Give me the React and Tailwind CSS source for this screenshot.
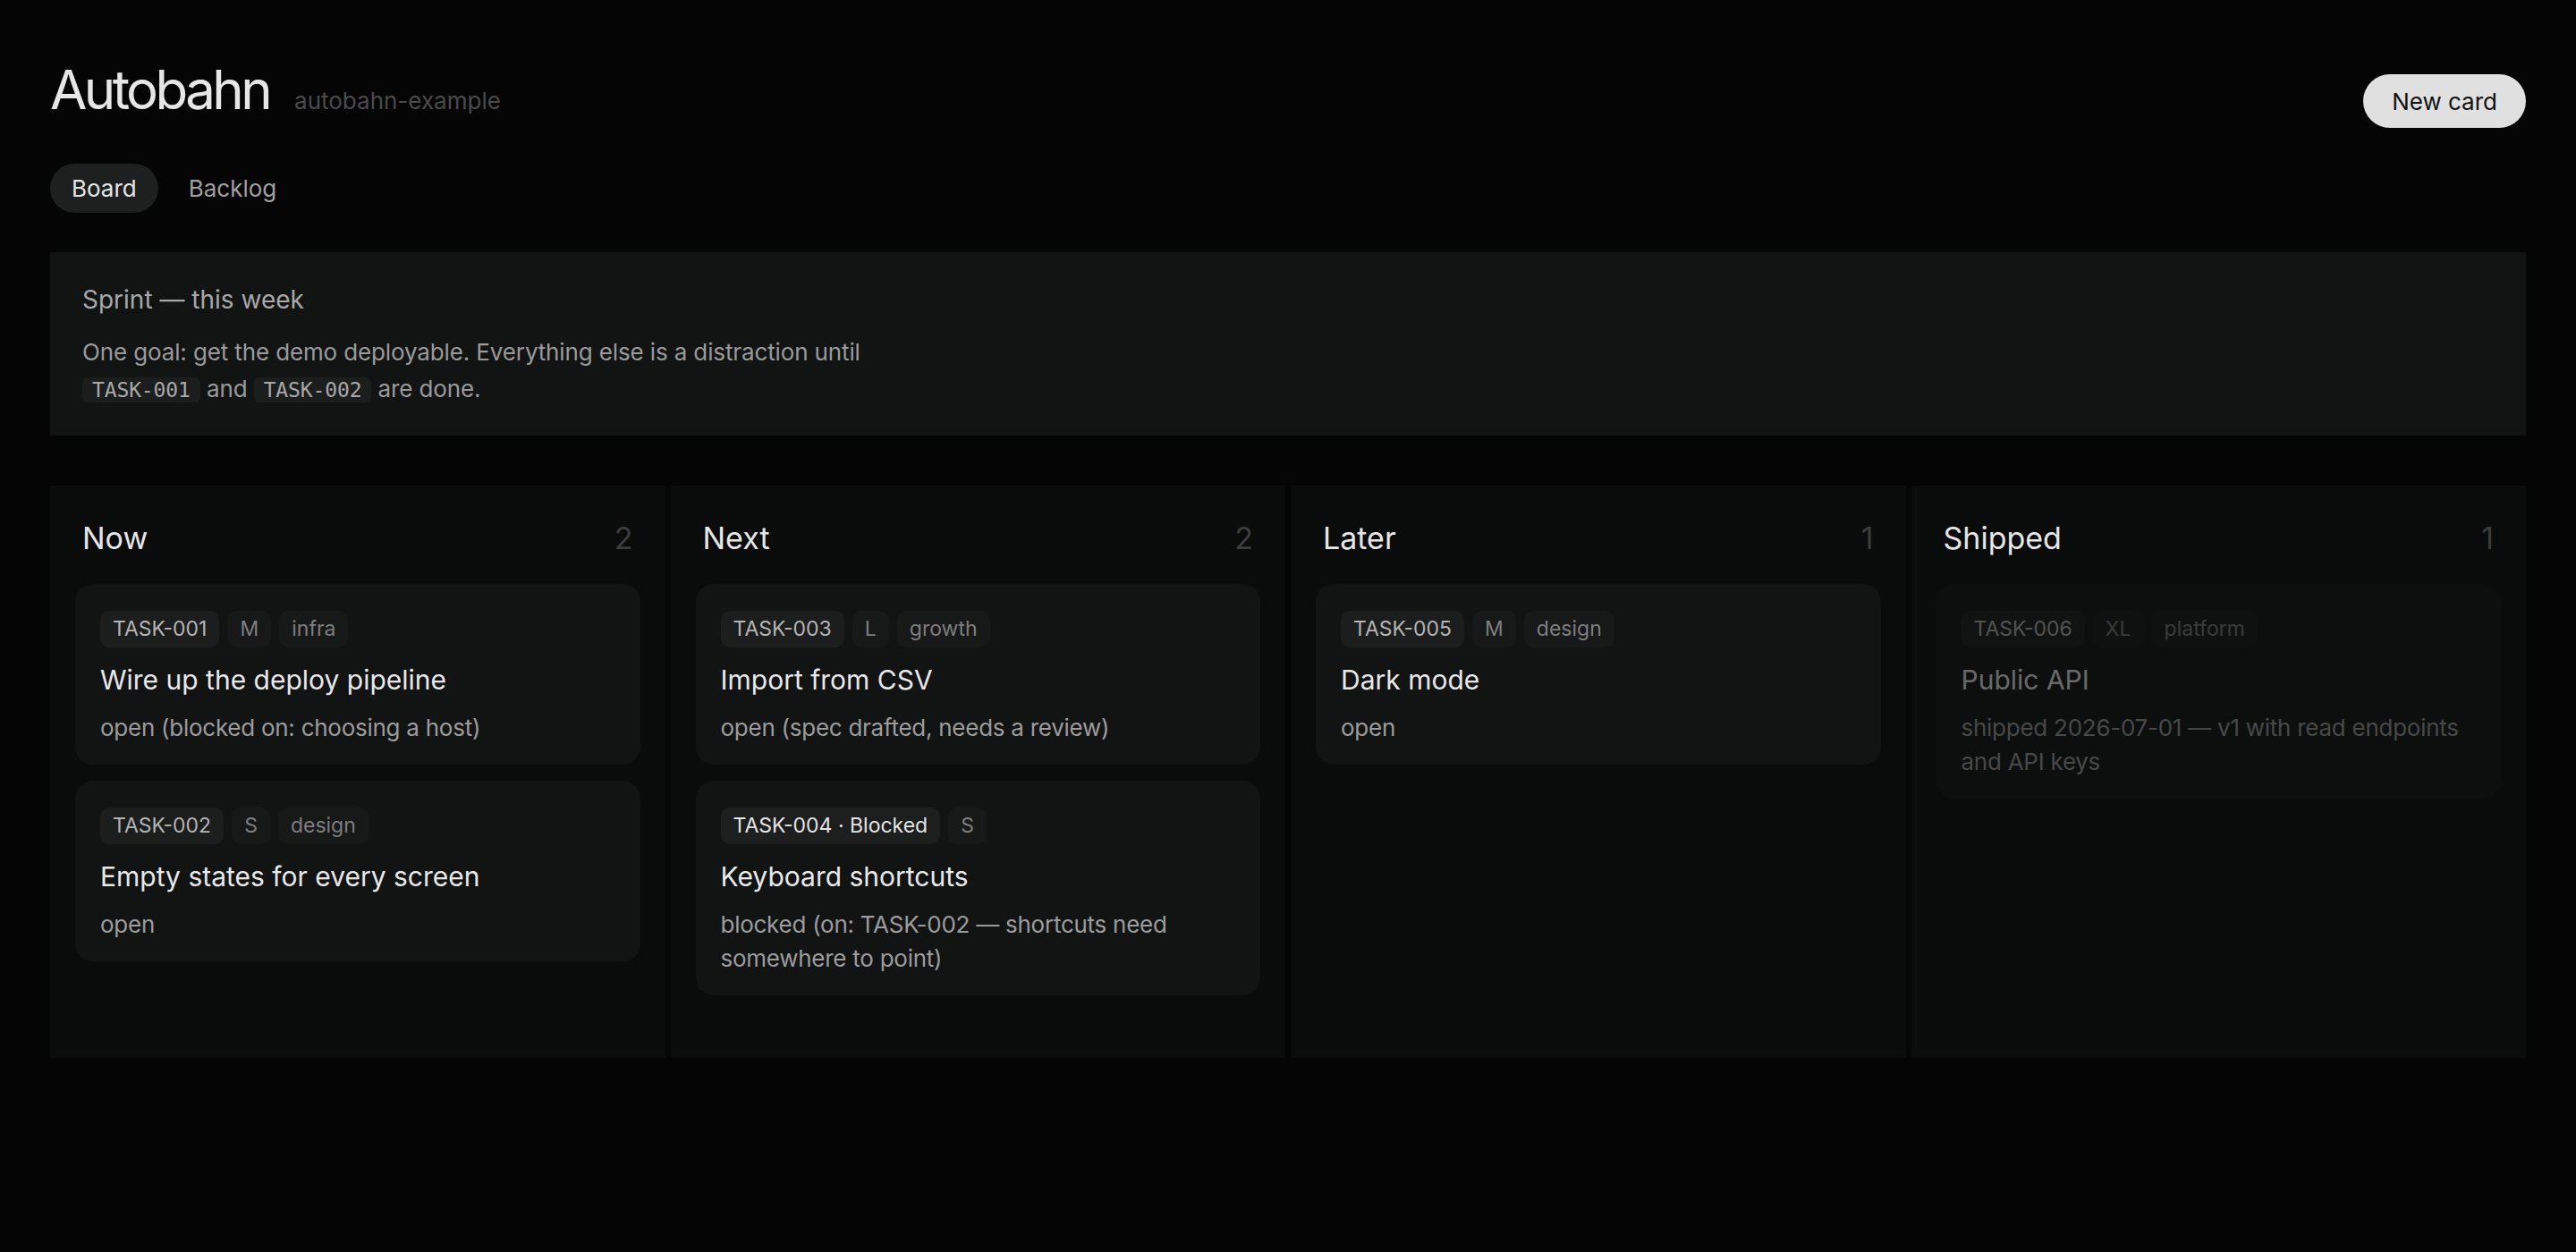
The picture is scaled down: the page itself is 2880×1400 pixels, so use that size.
import React from 'react'

const COLUMNS = [
  {
    name: 'Now',
    cards: [
      { id: 'TASK-001', size: 'M', tag: 'infra', title: 'Wire up the deploy pipeline', status: 'open (blocked on: choosing a host)' },
      { id: 'TASK-002', size: 'S', tag: 'design', title: 'Empty states for every screen', status: 'open' },
    ],
  },
  {
    name: 'Next',
    cards: [
      { id: 'TASK-003', size: 'L', tag: 'growth', title: 'Import from CSV', status: 'open (spec drafted, needs a review)' },
      { id: 'TASK-004 · Blocked', blocked: true, size: 'S', title: 'Keyboard shortcuts', status: 'blocked (on: TASK-002 — shortcuts need somewhere to point)' },
    ],
  },
  {
    name: 'Later',
    cards: [
      { id: 'TASK-005', size: 'M', tag: 'design', title: 'Dark mode', status: 'open' },
    ],
  },
  {
    name: 'Shipped',
    cards: [
      { id: 'TASK-006', size: 'XL', tag: 'platform', title: 'Public API', status: 'shipped 2026-07-01 — v1 with read endpoints and API keys', done: true },
    ],
  },
]

function Chip({ children, strong, bright }) {
  const tone = bright
    ? 'bg-[#1d1e1e] text-[#e4e4e4]'
    : strong
      ? 'bg-[#1c1d1d] text-[#b4b4b4]'
      : 'bg-[#171818] text-[#7e7e7e]'
  return (
    <span className={`h-[41px] flex items-center px-[14px] rounded-[10px] text-[23px] ${tone}`}>
      {children}
    </span>
  )
}

function Card({ card }) {
  return (
    <div className={`bg-[#121313] rounded-[20px] px-7 pt-[30px] pb-[22px] ${card.done ? 'opacity-[0.42]' : ''}`}>
      <div className="flex gap-[9px]">
        <Chip strong bright={card.blocked}>{card.id}</Chip>
        <Chip>{card.size}</Chip>
        {card.tag && <Chip>{card.tag}</Chip>}
      </div>
      <h3 className="mt-[15px] text-[30px] leading-[42px] text-[#e8e8e8]">{card.title}</h3>
      <p className="mt-[14px] text-[26px] leading-[38px] tracking-[-0.01em] text-[#9c9c9c]">{card.status}</p>
    </div>
  )
}

function Column({ col }) {
  return (
    <div className="bg-[#0a0b0b] min-h-[640px] p-7">
      <div className="mt-[10px] mb-[31px] px-2 flex justify-between text-[34px] leading-[41px]">
        <span className="text-[#e6e6e6]">{col.name}</span>
        <span className="text-[#3c3c3c]">{col.cards.length}</span>
      </div>
      <div className="flex flex-col gap-[18px]">
        {col.cards.map(c => <Card key={c.id} card={c} />)}
      </div>
    </div>
  )
}

export default function App() {
  const mono = { fontFamily: '"DejaVu Sans Mono", monospace' }
  return (
    <div className="min-h-screen bg-[#050505] px-14 pt-16 pb-20" style={{ fontFamily: 'Inter, "Noto Sans", sans-serif' }}>
      <header className="flex justify-between items-start">
        <div className="flex items-baseline gap-7">
          <h1 className="text-[60px] leading-[72px] tracking-[-0.06em] text-[#e6e6e6]">Autobahn</h1>
          <span className="text-[26px] text-[#4a4a4a]">autobahn-example</span>
        </div>
        <button className="mt-[19px] h-[60px] px-8 rounded-full bg-[#e0e0e0] text-[#111] text-[26px]">New card</button>
      </header>

      <nav className="mt-[40px] flex items-center gap-[10px] text-[26px]">
        <span className="h-[55px] flex items-center px-6 rounded-full bg-[#1e2020] text-[#e6e6e6]">Board</span>
        <span className="h-[55px] flex items-center px-6 text-[#a0a0a0]">Backlog</span>
      </nav>

      <section className="mt-[44px] bg-[#121414] px-9 pt-[34px] pb-[30px]">
        <h2 className="text-[28px] leading-[39px] text-[#a8a8a8]">Sprint — this week</h2>
        <p className="mt-[18px] text-[26px] leading-[41px] tracking-[-0.005em] text-[#9a9a9a] max-w-[900px]">
          One goal: get the demo deployable. Everything else is a distraction until{' '}
          <code className="px-[11px] py-[1px] rounded-[6px] bg-[#1c1e1e] text-[23px] text-[#a8a8a8]" style={mono}>TASK-001</code>{' '}and{' '}
          <code className="px-[11px] py-[1px] rounded-[6px] bg-[#1c1e1e] text-[23px] text-[#a8a8a8]" style={mono}>TASK-002</code>{' '}are done.
        </p>
      </section>

      <main className="mt-14 grid grid-cols-4 gap-[6px]">
        {COLUMNS.map(col => <Column key={col.name} col={col} />)}
      </main>
    </div>
  )
}
